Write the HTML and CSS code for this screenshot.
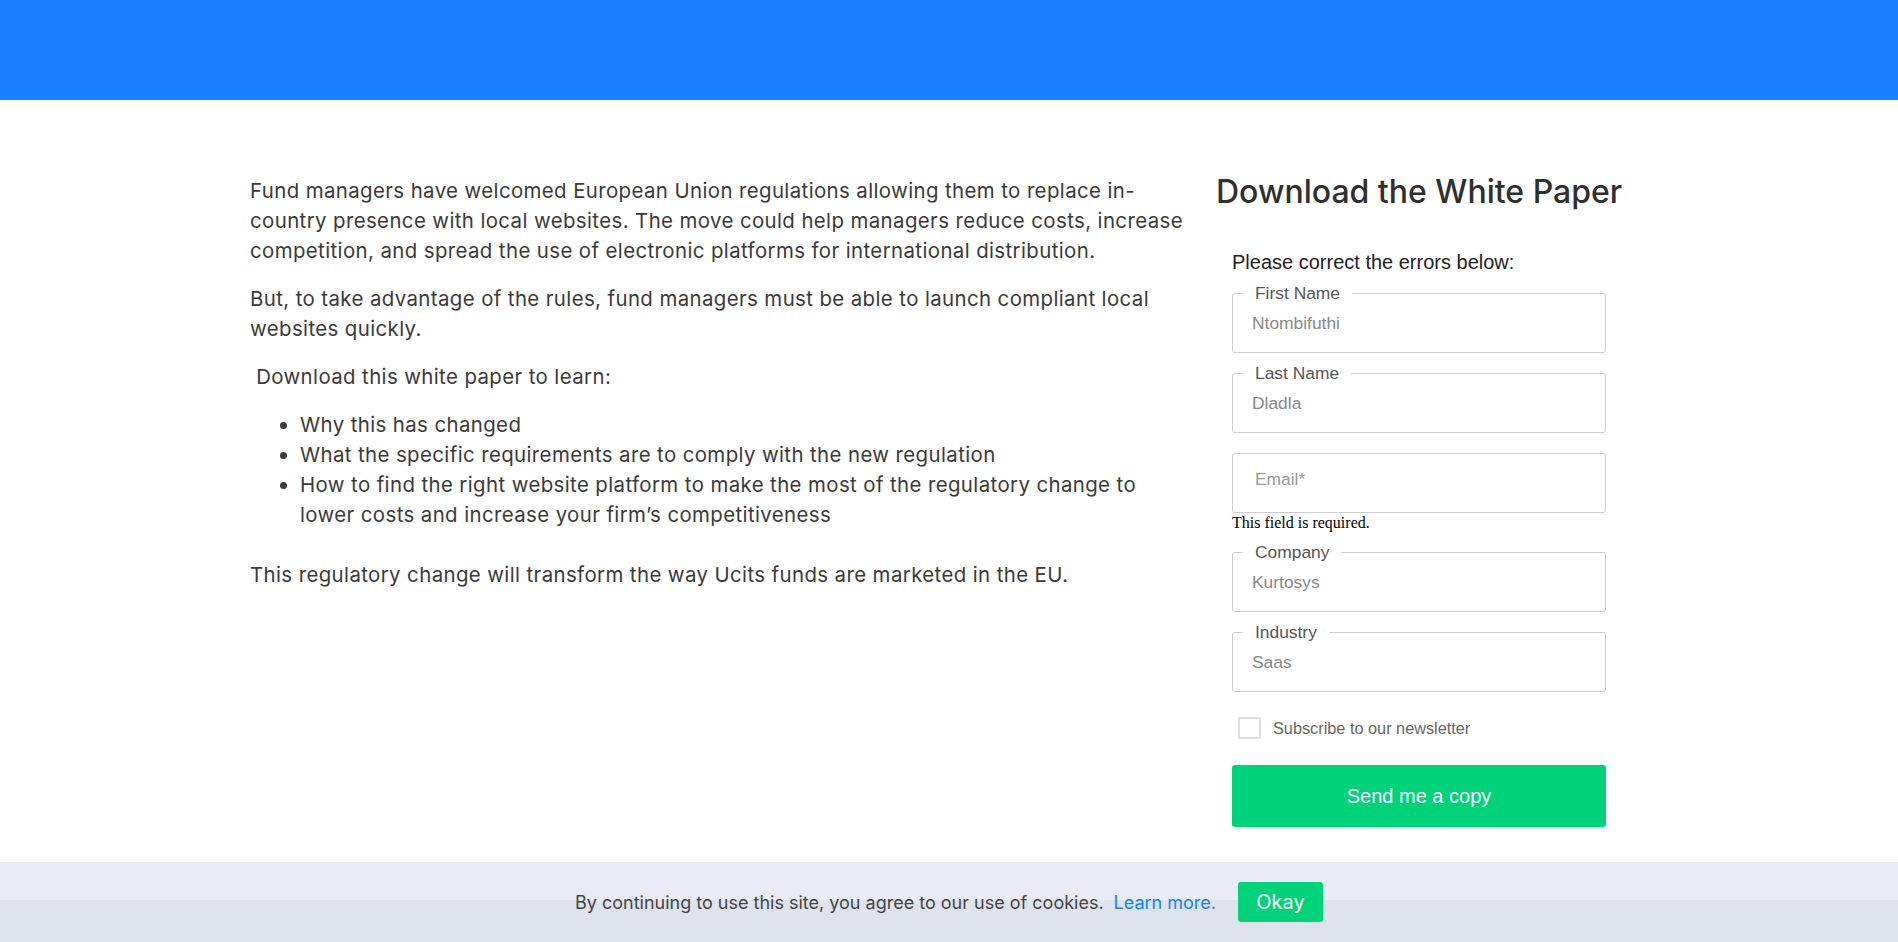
FILE: index.html
```html
<!DOCTYPE html>
<html lang="en">
<head>
<meta charset="utf-8">
<title>Download the White Paper</title>
<link rel="stylesheet" href="styles.css">
</head>
<body>
<header class="topbar"></header>
<main class="page">
  <section class="intro">
    <p>Fund managers have welcomed European Union regulations allowing them to replace in-country presence with local websites. The move could help managers reduce costs, increase competition, and spread the use of electronic platforms for international distribution.</p>
    <p>But, to take advantage of the rules, fund managers must be able to launch compliant local websites quickly.</p>
    <p class="lead">&nbsp;Download this white paper to learn:</p>
    <ul class="points">
      <li>Why this has changed</li>
      <li>What the specific requirements are to comply with the new regulation</li>
      <li>How to find the right website platform to make the most of the regulatory change to lower costs and increase your firm’s competitiveness</li>
    </ul>
    <p>This regulatory change will transform the way Ucits funds are marketed in the EU.</p>
  </section>
  <aside class="download">
    <h2 class="download-title">Download the White Paper</h2>
    <form class="wp-form">
      <p class="form-error">Please correct the errors below:</p>
      <div class="field">
        <span class="field-label">First Name</span>
        <input class="field-input" type="text" value="Ntombifuthi">
      </div>
      <div class="field">
        <span class="field-label">Last Name</span>
        <input class="field-input" type="text" value="Dladla">
      </div>
      <div class="field field-empty">
        <input class="field-input" type="email" placeholder="Email*">
      </div>
      <div class="field-msg">This field is required.</div>
      <div class="field">
        <span class="field-label">Company</span>
        <input class="field-input" type="text" value="Kurtosys">
      </div>
      <div class="field">
        <span class="field-label">Industry</span>
        <input class="field-input" type="text" value="Saas">
      </div>
      <label class="check-row">
        <span class="check-box"></span>
        <span class="check-text">Subscribe to our newsletter</span>
      </label>
      <button class="send-btn" type="button">Send me a copy</button>
    </form>
  </aside>
</main>
<div class="cookie-bar">
  <span class="cookie-text">By continuing to use this site, you agree to our use of cookies.</span>
  <a class="cookie-link" href="#">Learn more.</a>
  <button class="cookie-ok" type="button">Okay</button>
</div>
</body>
</html>
```
FILE: styles.css
```css
* { box-sizing: border-box; }
html, body { margin: 0; padding: 0; }
body {
  background: #fff;
  font-family: "Inter", "Lato", "Liberation Sans", sans-serif;
  color: #333;
}
.topbar {
  height: 100px;
  background: #1b80ff;
}
.page {
  width: 1398px;
  margin: 0 auto;
  display: flex;
  gap: 26px;
  padding-top: 76px;
}
.intro {
  flex: 0 0 940px;
  font-size: 20.4px;
  letter-spacing: 0.4px;
  line-height: 30px;
  color: #3a3a3a;
}
.intro p { margin: 0 0 18px; }
.intro .points {
  margin: 0 0 30px;
  padding-left: 50px;
}
.download { flex: 1; }
.download-title {
  margin: 0;
  font-size: 32px;
  line-height: 30px;
  font-weight: 500;
  color: #2f2f2f;
  padding-top: 1px;
}
.wp-form {
  margin: 44px 0 0 16px;
  width: 374px;
  display: flex;
  flex-direction: column;
  font-family: "Liberation Sans", Arial, sans-serif;
}
.form-error {
  margin: 0 0 19px;
  font-size: 20px;
  line-height: 23px;
  color: #222;
}
.field {
  position: relative;
  height: 60px;
  border: 1px solid #ccc;
  border-radius: 3px;
  margin-bottom: 20px;
  display: flex;
  align-items: center;
}
.field-label {
  position: absolute;
  left: 10px;
  top: -11px;
  padding: 0 12px;
  background: #fff;
  font-size: 17.4px;
  line-height: 20px;
  color: #555;
}
.field-input {
  width: 100%;
  border: 0;
  outline: 0;
  background: transparent;
  padding: 0 0 0 19px;
  font-family: "Liberation Sans", Arial, sans-serif;
  font-size: 17.4px;
  color: #888;
}
.field-empty { margin-bottom: 0; }
.field-empty .field-input { padding: 0 0 8px 22px; }
.field-input::placeholder { color: #999; }
.field-msg {
  font-family: "Liberation Serif", "Times New Roman", serif;
  font-size: 16px;
  line-height: 18px;
  color: #000;
  margin: 1px 0 20px;
}
.check-row {
  display: flex;
  align-items: center;
  gap: 12px;
  margin: 5px 0 26px 6px;
  font-size: 16.3px;
  color: #666;
}
.check-box {
  width: 23px;
  height: 22px;
  border: 2px solid #dedede;
  background: #fff;
}
.send-btn {
  height: 62px;
  border: 0;
  border-radius: 3px;
  background: #00d27a;
  color: #fff;
  font-family: "Liberation Sans", Arial, sans-serif;
  font-size: 20px;
  cursor: pointer;
}
.cookie-bar {
  position: fixed;
  left: 0;
  right: 0;
  bottom: 0;
  height: 80px;
  display: flex;
  align-items: center;
  justify-content: center;
  background: linear-gradient(#e9ecf6 0 38px, #dfe3ee 38px);
  font-size: 18px;
  color: #444;
}
.cookie-link {
  margin-left: 10px;
  color: #1b80ff;
  text-decoration: none;
}
.cookie-ok {
  margin-left: 22px;
  width: 85px;
  height: 40px;
  border: 0;
  border-radius: 3px;
  background: #00d27a;
  color: #fff;
  font-family: "Inter", "Lato", sans-serif;
  font-size: 20px;
}
```
